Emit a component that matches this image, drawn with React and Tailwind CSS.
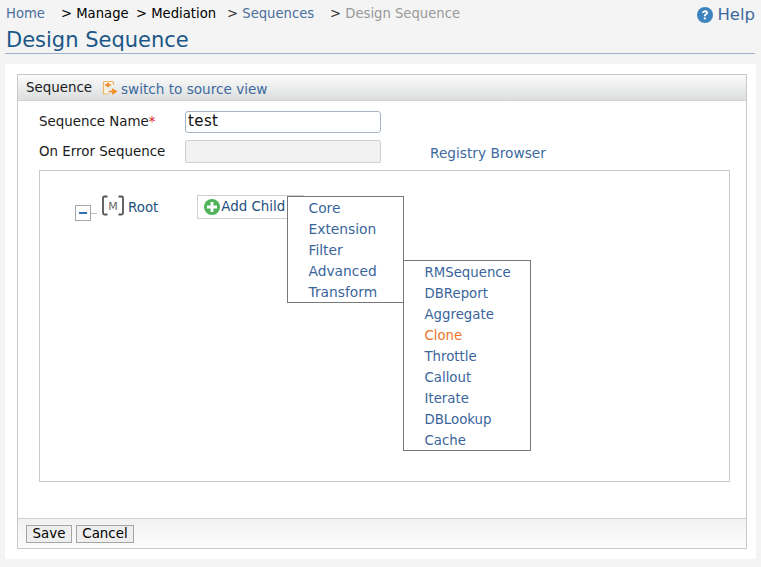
const font = { fontFamily: '"DejaVu Sans", sans-serif' };

function MenuItem({ children, className = "text-[#3a659b]", size = "text-[13.8px]", pad = "pl-[20.5px]" }) {
  return <div className={`h-[21px] leading-[21px] ${pad} ${size} ${className}`}>{children}</div>;
}

function SubItem({ children, className }) {
  return <MenuItem size="text-[13.3px]" pad="pl-[20.5px]" className={className}>{children}</MenuItem>;
}

export default function App() {
  return (
    <div className="w-[761px] h-[567px] bg-[#f4f4f4] overflow-hidden text-[13.4px] text-[#1a1a1a] flex flex-col font-['DejaVu_Sans',sans-serif]">
      <div className="relative h-[54px] ml-[5px] mr-[6px] border-b border-[#9fb0cc] shrink-0">
        <div className="flex items-center h-[26px] pt-[2px] whitespace-nowrap text-[13.2px] pl-px">
          <span className="text-[#4a6f9c] w-[55px]">Home</span>
          <span className="text-black w-[75px]">&gt; Manage</span>
          <span className="text-black w-[91px]">&gt; Mediation</span>
          <span className="text-[#4a6f9c] w-[103px]"><span className="text-[#333]">&gt;</span> Sequences</span>
          <span className="text-[#999]"><span className="text-[#333]">&gt;</span> Design Sequence</span>
        </div>
        <div className="text-[#1a5788] text-[21px] leading-[26px] pl-px mt-px">Design Sequence</div>
        <div className="absolute right-0 top-[3px] flex items-center gap-1 text-[#3c6a9e] text-[16.5px]">
          <svg width="16" height="16" viewBox="0 0 16 16" className="-mt-px"><circle cx="8" cy="8" r="8" fill="#3d83bd" /><path d="M5.2 6c.1-1.7 1.3-2.7 3-2.7 1.6 0 2.8 1 2.8 2.4 0 1-.5 1.6-1.3 2.1-.7.5-.9.7-.9 1.5H6.9c0-1.2.3-1.7 1.1-2.2.6-.4.9-.7.9-1.2 0-.5-.3-.8-.8-.8-.6 0-.9.3-1 1z" fill="#fff" /><rect x="6.8" y="10.4" width="2" height="2" fill="#fff" /></svg>
          <span>Help</span>
        </div>
      </div>

      <div className="mt-[10px] ml-[5px] w-[751px] h-[495px] bg-white pt-[10px] pl-3 pr-[9px] shrink-0">
        <div className="w-[730px] h-[475px] border border-[#c9c9c9] flex flex-col">
          <div className="h-[26px] shrink-0 border-b border-[#cfd2d4] bg-gradient-to-b from-[#fbfbfb] to-[#dcdedf] flex items-center pl-2 whitespace-nowrap">
            <span className="text-[13.4px] mt-[1px] w-[76px]">Sequence</span>
            <svg width="16" height="16" viewBox="0 0 16 16" className="mr-[3px]"><path d="M1.5 1.5h9l1 1v2.500M1.500 1.500v12.500h5" fill="#fdf3dc" stroke="#e9b870" strokeWidth="1.2" /><path d="M7 3 4 5l3 2M4 5h5M10 9l4 2.500-4 2.500M14 11.500H7" fill="none" stroke="#ef8a1d" strokeWidth="1.5" /></svg>
            <span className="text-[#3c6a9e] text-[13.6px] mt-[4px]">switch to source view</span>
          </div>

          <div className="flex-1 flex flex-col min-h-0">
            <div className="flex items-center mt-[9px] h-[23px]">
              <span className="w-[167px] pl-[21px] pt-[2px] shrink-0 whitespace-nowrap">Sequence Name<span className="text-[#e02020]">*</span></span>
              <div className="w-[196px] h-[22px] rounded-[3px] border border-[#a9b4c4] pl-[2px] text-[15px] leading-[18px] text-[#111] tracking-[0.4px]">test</div>
            </div>
            <div className="flex items-center mt-[7px] h-[23px]">
              <span className="w-[167px] pl-[21px] pt-[2px] shrink-0 whitespace-nowrap">On Error Sequence</span>
              <div className="w-[196px] h-[23px] rounded-[2px] border border-[#cfcfcf] bg-[#f2f2f2]"></div>
              <span className="ml-[49px] mt-[3px] text-[#3c6a9e] text-[13.7px] whitespace-nowrap">Registry Browser</span>
            </div>

            <div className="relative mx-[21px] mt-[7px] w-[691px] h-[312px] border border-[#c9c9c9] shrink-0">
              <div className="flex items-start pt-[24px] pl-[36px]">
                <div className="w-[16px] h-[16px] mt-[10px] -ml-px border border-[#a0a8b0] flex items-center justify-center shrink-0">
                  <div className="w-[8px] h-[2px] bg-[#2f6fb5]"></div>
                </div>
                <div className="w-[6px] h-px bg-[#bbb] mt-[18px] shrink-0"></div>
                <svg width="24" height="23" viewBox="0 0 24 23" className="ml-[4px] shrink-0">
                  <path d="M6.500 1.500H3.500Q2 1.500 2 3v15q0 1.500 1.500 1.500h3M17.500 1.500h3q1.500 0 1.500 1.500v15q0 1.500-1.500 1.500h-3" fill="none" stroke="#555" strokeWidth="1.8" />
                  <text x="12" y="15" textAnchor="middle" fontSize="11" fill="#666" style={font}>M</text>
                </svg>
                <span className="ml-[3px] pt-[1px] text-[#1c4f7e] leading-[24px]">Root</span>
                <div className="ml-[39px] h-[24px] w-[107px] border border-[#d0d0d0] flex items-center pl-[6px] text-[#1c4f7e]">
                  <svg width="16" height="16" viewBox="0 0 16 16" className="shrink-0"><circle cx="8" cy="8" r="8" fill="#4fb35a" /><path d="M6.600 3h2.800v3.600H13v2.800H9.400V13H6.600V9.400H3V6.600h3.600z" fill="#fff" /></svg>
                  <span className="ml-px whitespace-nowrap">Add Child</span>
                </div>
              </div>

              <div className="absolute left-[247px] top-[25px] w-[117px] h-[107px] bg-white border border-[#777] pt-px">
                <MenuItem>Core</MenuItem>
                <MenuItem>Extension</MenuItem>
                <MenuItem>Filter</MenuItem>
                <MenuItem>Advanced</MenuItem>
                <MenuItem>Transform</MenuItem>
              </div>
              <div className="absolute left-[363px] top-[89px] w-[128px] h-[191px] bg-white border border-[#777] pt-px">
                <SubItem>RMSequence</SubItem>
                <SubItem>DBReport</SubItem>
                <SubItem>Aggregate</SubItem>
                <SubItem className="text-[#e8762c]">Clone</SubItem>
                <SubItem>Throttle</SubItem>
                <SubItem>Callout</SubItem>
                <SubItem>Iterate</SubItem>
                <SubItem>DBLookup</SubItem>
                <SubItem>Cache</SubItem>
              </div>
            </div>
          </div>

          <div className="h-[30px] shrink-0 border-t border-[#cfd2d4] bg-gradient-to-b from-[#f1f1f1] to-[#fcfcfc] flex items-center pl-2 gap-[4px]">
            <div className="h-[18px] w-[46px] border border-[#a5a5a5] bg-[#eeeeee] text-center leading-[16px] text-black">Save</div>
            <div className="h-[18px] w-[58px] border border-[#a5a5a5] bg-[#eeeeee] text-center leading-[16px] text-black">Cancel</div>
          </div>
        </div>
      </div>
    </div>
  );
}
